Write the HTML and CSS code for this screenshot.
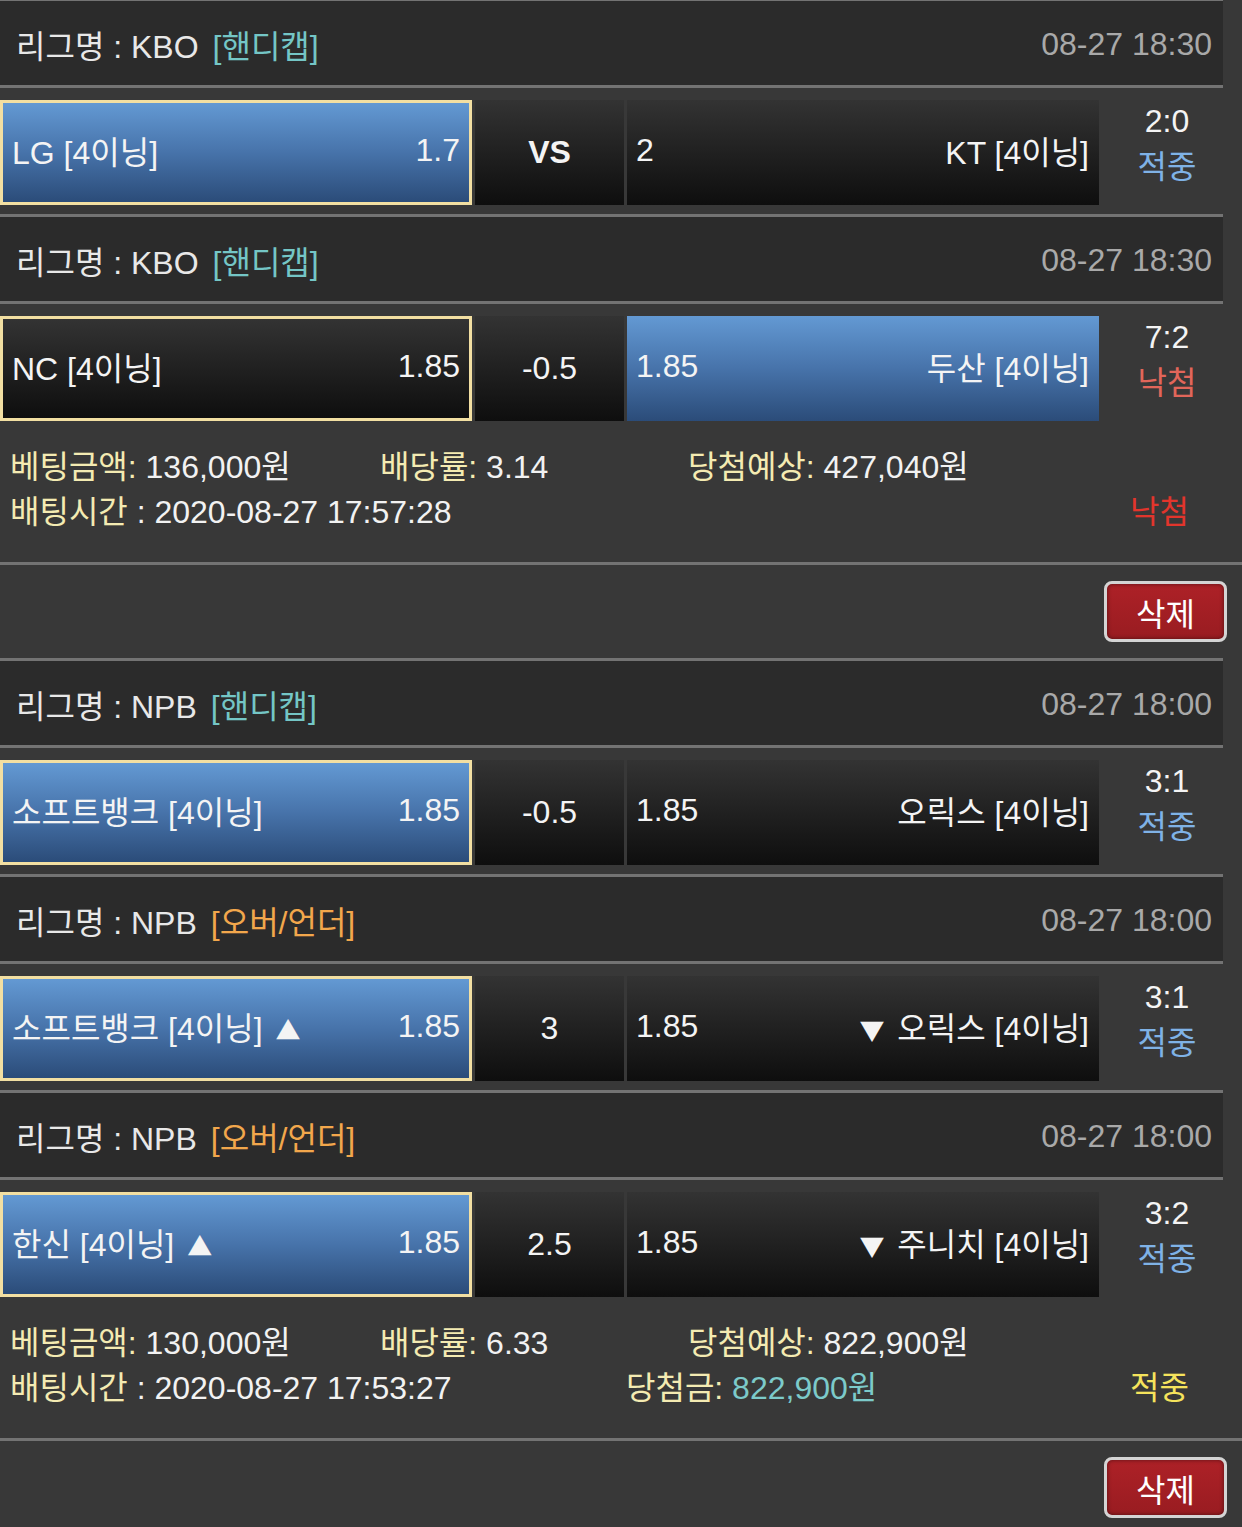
FILE: index.html
```html
<!doctype html>
<html lang="ko">
  <head>
    <meta charset="UTF-8" />
    <meta name="viewport" content="width=device-width, initial-scale=1.0" />
    <title>배팅내역</title>
    <link rel="stylesheet" href="styles.css">
  </head>
  <body>
    <main class="bet-list">
      <!-- slip 1 -->
      <section class="slip">
        <div class="game">
          <div class="game-head">
            <span class="league">리그명 : KBO</span>
            <span class="bet-type handi">[핸디캡]</span>
            <span class="game-time">08-27 18:30</span>
          </div>
          <div class="game-row">
            <div class="pick home on"><span>LG [4이닝]</span><span>1.7</span></div>
            <div class="pick mid"><b>VS</b></div>
            <div class="pick away"><span>2</span><span>KT [4이닝]</span></div>
            <div class="result"><div>2:0</div><div class="hit">적중</div></div>
          </div>
        </div>
        <div class="game">
          <div class="game-head">
            <span class="league">리그명 : KBO</span>
            <span class="bet-type handi">[핸디캡]</span>
            <span class="game-time">08-27 18:30</span>
          </div>
          <div class="game-row">
            <div class="pick home"><span>NC [4이닝]</span><span>1.85</span></div>
            <div class="pick mid">-0.5</div>
            <div class="pick away on"><span>1.85</span><span>두산 [4이닝]</span></div>
            <div class="result"><div>7:2</div><div class="miss">낙첨</div></div>
          </div>
        </div>
        <div class="slip-info">
          <div class="info-line first">
            <span><em>베팅금액:</em> 136,000원</span>
            <span><em>배당률:</em> 3.14</span>
            <span><em>당첨예상:</em> 427,040원</span>
          </div>
          <div class="info-line second">
            <span><em>배팅시간</em> : 2020-08-27 17:57:28</span>
            <span></span>
            <span class="status lost">낙첨</span>
          </div>
        </div>
      </section>
      <div class="slip-actions"><button class="btn-delete">삭제</button></div>

      <!-- slip 2 -->
      <section class="slip">
        <div class="game">
          <div class="game-head">
            <span class="league">리그명 : NPB</span>
            <span class="bet-type handi">[핸디캡]</span>
            <span class="game-time">08-27 18:00</span>
          </div>
          <div class="game-row">
            <div class="pick home on"><span>소프트뱅크 [4이닝]</span><span>1.85</span></div>
            <div class="pick mid">-0.5</div>
            <div class="pick away"><span>1.85</span><span>오릭스 [4이닝]</span></div>
            <div class="result"><div>3:1</div><div class="hit">적중</div></div>
          </div>
        </div>
        <div class="game">
          <div class="game-head">
            <span class="league">리그명 : NPB</span>
            <span class="bet-type ou">[오버/언더]</span>
            <span class="game-time">08-27 18:00</span>
          </div>
          <div class="game-row">
            <div class="pick home on"><span>소프트뱅크 [4이닝] <i class="arrow">▲</i></span><span>1.85</span></div>
            <div class="pick mid">3</div>
            <div class="pick away"><span>1.85</span><span><i class="arrow">▼</i> 오릭스 [4이닝]</span></div>
            <div class="result"><div>3:1</div><div class="hit">적중</div></div>
          </div>
        </div>
        <div class="game">
          <div class="game-head">
            <span class="league">리그명 : NPB</span>
            <span class="bet-type ou">[오버/언더]</span>
            <span class="game-time">08-27 18:00</span>
          </div>
          <div class="game-row">
            <div class="pick home on"><span>한신 [4이닝] <i class="arrow">▲</i></span><span>1.85</span></div>
            <div class="pick mid">2.5</div>
            <div class="pick away"><span>1.85</span><span><i class="arrow">▼</i> 주니치 [4이닝]</span></div>
            <div class="result"><div>3:2</div><div class="hit">적중</div></div>
          </div>
        </div>
        <div class="slip-info">
          <div class="info-line first">
            <span><em>베팅금액:</em> 130,000원</span>
            <span><em>배당률:</em> 6.33</span>
            <span><em>당첨예상:</em> 822,900원</span>
          </div>
          <div class="info-line second">
            <span><em>배팅시간</em> : 2020-08-27 17:53:27</span>
            <span class="payout"><em>당첨금:</em> 822,900원</span>
            <span class="status won">적중</span>
          </div>
        </div>
      </section>
      <div class="slip-actions"><button class="btn-delete">삭제</button></div>
    </main>
  </body>
</html>
```

FILE: styles.css
```css
* {
  margin: 0;
  padding: 0;
  box-sizing: border-box;
}

html,
body {
  height: 100%;
  overflow: hidden;
}

body {
  background: #383838;
  color: #f2f2f2;
  font-family: "Liberation Sans", "Noto Sans CJK KR", sans-serif;
  font-size: 32px;
}

.bet-list {
  margin-top: -2px;
}

/* game header */
.game-head {
  display: flex;
  align-items: center;
  width: 1223px;
  height: 90px;
  padding: 2px 11px 0 16px;
  background: #2b2b2b;
  border-top: 3px solid #737373;
  border-bottom: 3px solid #737373;
}

.league {
  color: #e8e8e8;
}

.bet-type {
  margin-left: 14px;
}

.bet-type.handi {
  color: #74c6c6;
}

.bet-type.ou {
  color: #f2a74c;
}

.game-time {
  margin-left: auto;
  color: #a9a9a9;
}

/* game row */
.game-row {
  display: grid;
  grid-template-columns: 472px 149px 472px 1fr;
  column-gap: 3px;
  height: 126px;
  padding: 12px 10px 9px 0;
}

.pick {
  display: flex;
  align-items: center;
  justify-content: space-between;
  height: 105px;
  padding: 0 10px 5px 9px;
  background: linear-gradient(180deg, #333 0%, #0e0e0e 100%);
  color: #f4f4f4;
  white-space: nowrap;
}

.pick.home {
  border: 3px solid #f2dfa2;
  padding-left: 9px;
  padding-right: 9px;
}

.pick.on {
  background: linear-gradient(180deg, #6399d3 0%, #4773aa 50%, #2b4c79 100%);
}

.pick.mid {
  justify-content: center;
  padding: 0;
}

.pick.mid b {
  font-weight: 700;
}

.arrow {
  font-style: normal;
  font-family: "Noto Sans CJK KR", sans-serif;
  font-size: 25px;
  margin-left: 4px;
  margin-right: 4px;
}

.result {
  display: flex;
  flex-direction: column;
  align-items: center;
  margin-top: -2px;
  line-height: 46px;
  color: #f4f4f4;
}

.result .hit {
  color: #7fb2e6;
}

.result .miss {
  color: #e2665a;
}

/* slip summary */
.slip-info {
  height: 132px;
  padding: 15px 0 0 10px;
  line-height: 45px;
}

.info-line {
  display: grid;
  white-space: nowrap;
}

.info-line.first {
  grid-template-columns: 370px 308px auto;
}

.info-line.second {
  grid-template-columns: 616px 504px auto;
}

.info-line em {
  font-style: normal;
  color: #f4ebb2;
}

.payout {
  color: #7ccaca;
}

.status.lost {
  color: #e2352c;
}

.status.won {
  color: #f5e35c;
}

/* delete button */
.slip-actions {
  display: flex;
  justify-content: flex-end;
  height: 96px;
  padding: 16px 15px 0 0;
  border-top: 3px solid #737373;
}

.btn-delete {
  width: 123px;
  height: 61px;
  border: 3px solid #d4d4d4;
  border-radius: 8px;
  background: linear-gradient(180deg, #ad2127 0%, #991c21 100%);
  box-shadow: inset 0 0 4px rgba(0, 0, 0, 0.5);
  color: #fff;
  font-family: "Liberation Sans", "Noto Sans CJK KR", sans-serif;
  font-size: 32px;
  cursor: pointer;
}
```
